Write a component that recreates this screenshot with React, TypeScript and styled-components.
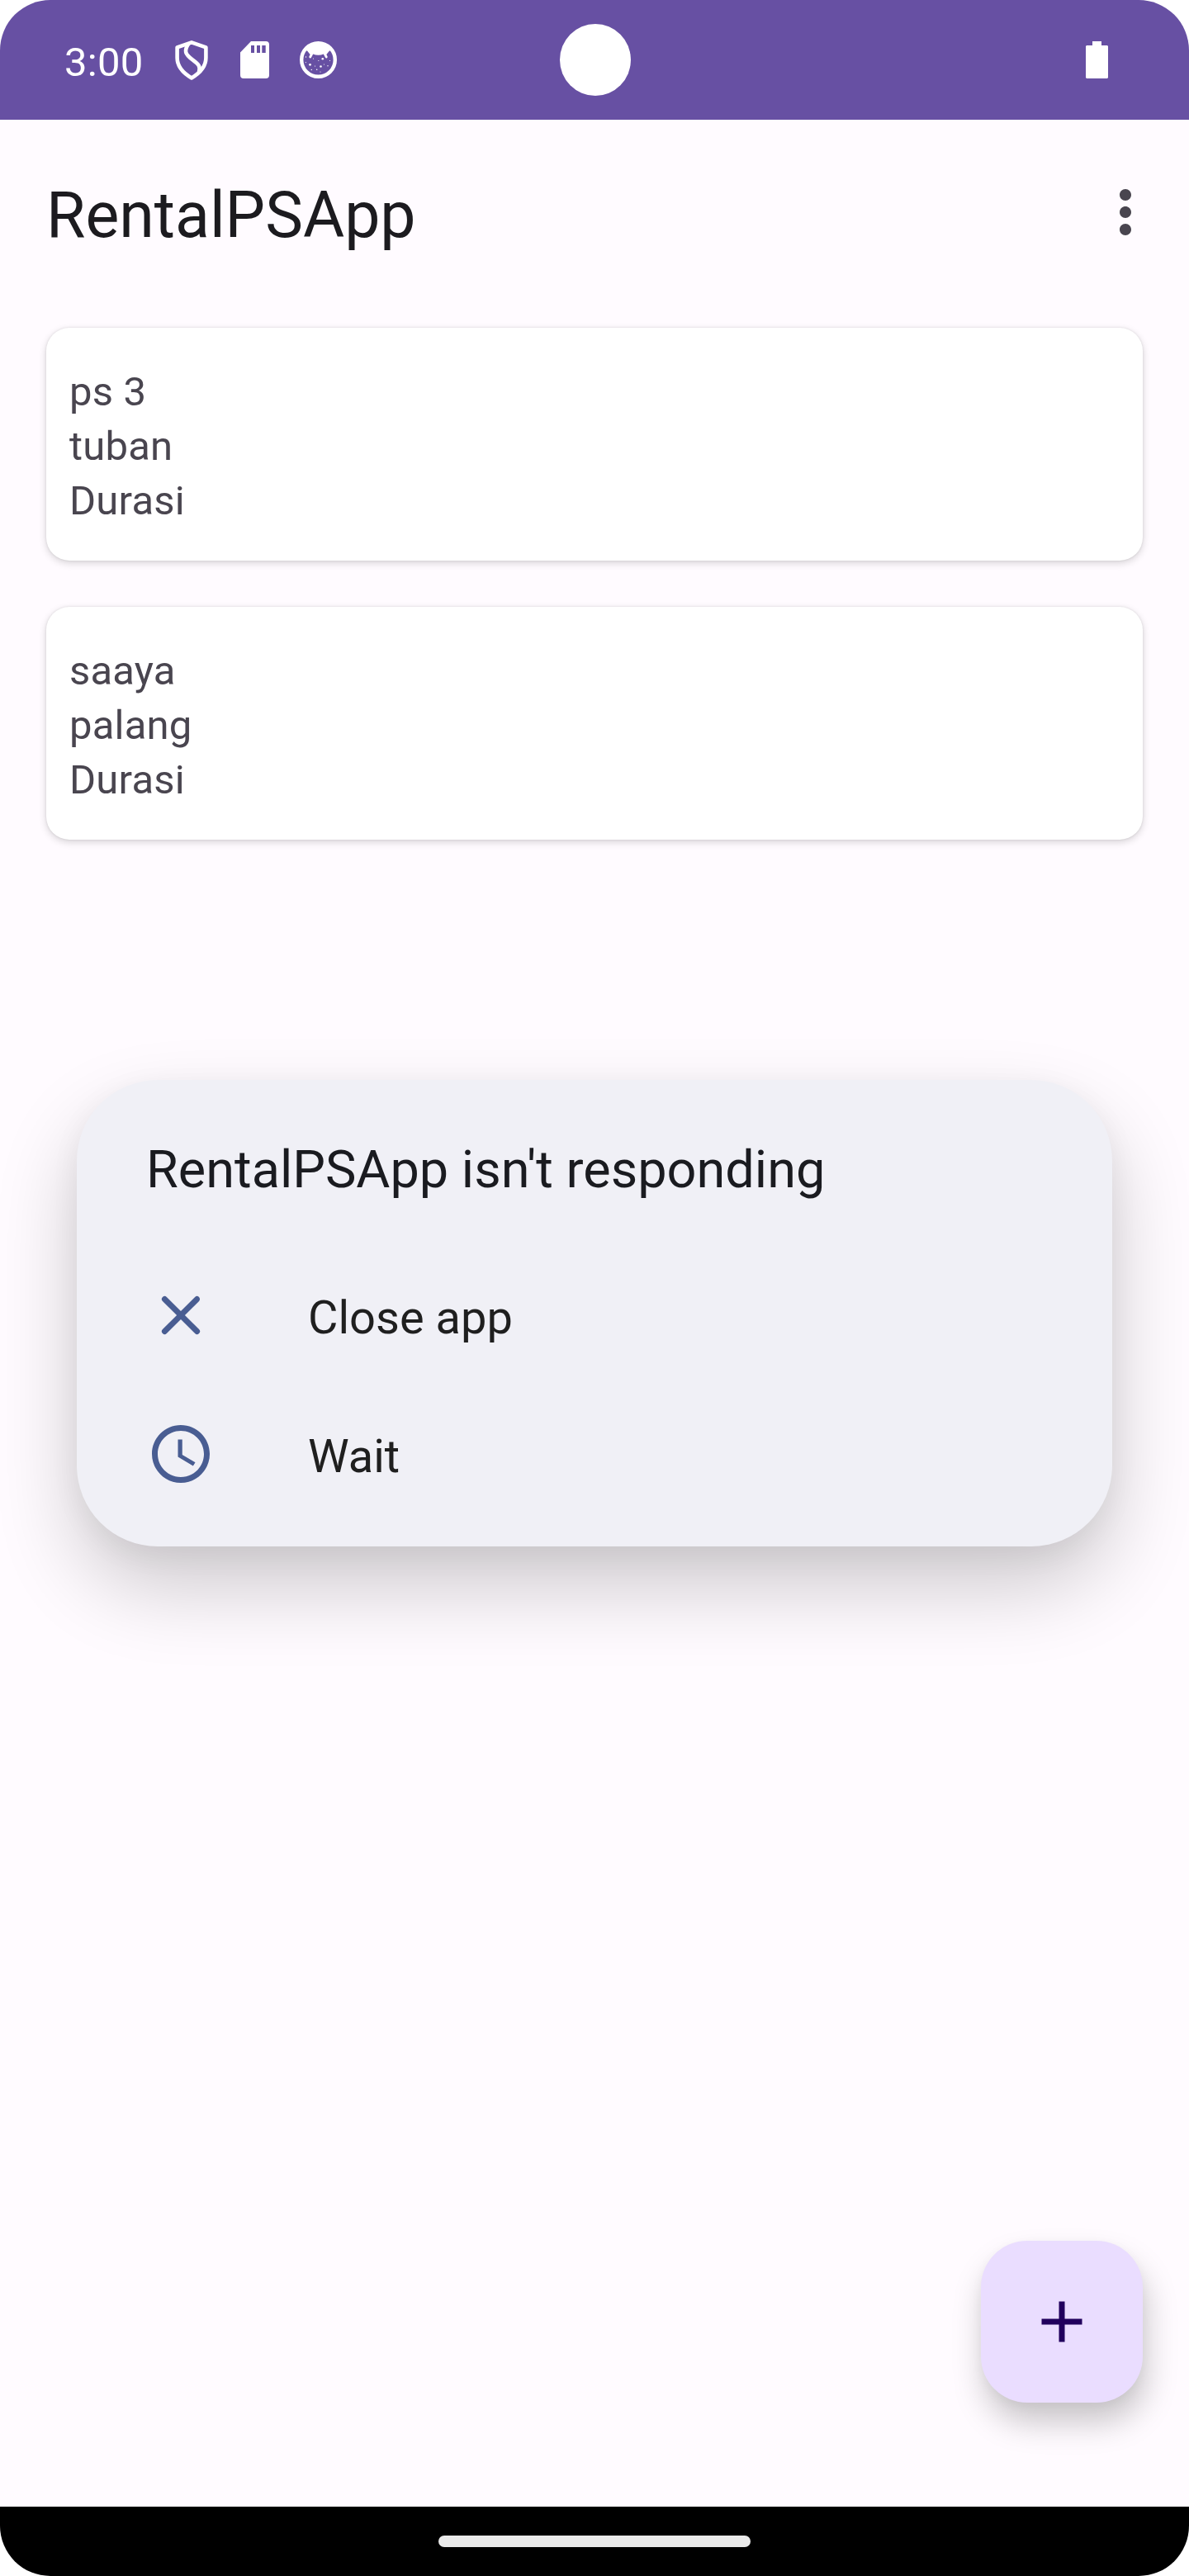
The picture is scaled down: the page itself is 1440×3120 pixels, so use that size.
import React from 'react';
import styled, { createGlobalStyle } from 'styled-components';

const GlobalStyle = createGlobalStyle`
  *, *::before, *::after { box-sizing: border-box; }
  html, body { margin: 0; padding: 0; background: #ffffff; }
  body { font-family: Roboto, "Noto Sans", sans-serif; }
  svg { display: block; flex: none; }
`;

const Screen = styled.div`
  position: relative;
  display: flex;
  flex-direction: column;
  width: 1440px;
  height: 3120px;
  overflow: hidden;
  border-radius: 61px;
  background: #fffbff;
`;

const StatusBar = styled.header`
  position: relative;
  display: flex;
  align-items: center;
  justify-content: space-between;
  flex: none;
  height: 145px;
  padding: 0 98px 0 78px;
  background: #6750a3;
  color: #ffffff;
`;

const StatusGroup = styled.div`
  display: flex;
  align-items: center;
`;

const Clock = styled.span`
  width: 132px;
  padding-top: 6px;
  font-size: 49px;
  line-height: 58px;
  letter-spacing: 0.3px;
`;

const NotificationIcons = styled.div`
  display: flex;
  align-items: center;
  gap: 37px;
`;

const CameraCutout = styled.div`
  position: absolute;
  top: 29px;
  left: 678px;
  width: 86px;
  height: 87px;
  border-radius: 50%;
  background: #ffffff;
`;

const AppBar = styled.div`
  display: flex;
  align-items: center;
  justify-content: space-between;
  flex: none;
  height: 224px;
  padding: 0 35px 0 56px;
`;

const AppTitle = styled.h1`
  margin: 0;
  padding-top: 8px;
  font-size: 77px;
  line-height: 90px;
  font-weight: 400;
  color: #1c1b1f;
`;

const MenuButton = styled.button`
  display: flex;
  margin: 0;
  padding: 0;
  border: 0;
  background: none;
  color: #49454f;
`;

const RentalList = styled.main`
  display: flex;
  flex-direction: column;
  flex: 1;
  gap: 56px;
  padding: 28px 56px;
`;

const RentalCard = styled.article`
  display: flex;
  flex-direction: column;
  height: 282px;
  padding: 45px 28px 0;
  border-radius: 28px;
  background: #ffffff;
  box-shadow: 0 3px 10px rgba(0, 0, 0, 0.16), 0 0 3px rgba(0, 0, 0, 0.1);
`;

const RentalLine = styled.span`
  font-size: 49px;
  line-height: 66px;
  letter-spacing: 0.2px;
  color: #49454f;
`;

const NavBar = styled.footer`
  display: flex;
  align-items: center;
  justify-content: center;
  flex: none;
  height: 84px;
  background: #000000;
`;

const NavHandle = styled.div`
  width: 378px;
  height: 14px;
  border-radius: 7px;
  background: #eaeaea;
`;

const Fab = styled.button`
  position: absolute;
  right: 56px;
  bottom: 210px;
  display: flex;
  align-items: center;
  justify-content: center;
  width: 196px;
  height: 196px;
  padding: 0;
  border: 0;
  border-radius: 56px;
  background: #eaddff;
  color: #21005d;
  box-shadow: 4px 24px 38px rgba(0, 0, 0, 0.21), 0 4px 14px rgba(0, 0, 0, 0.04);
`;

const Dialog = styled.section`
  position: absolute;
  top: 1308px;
  left: 93px;
  display: flex;
  flex-direction: column;
  width: 1254px;
  height: 565px;
  padding: 72px 84px 27px;
  border-radius: 98px;
  background: #f0f0f6;
  box-shadow: 0 48px 100px rgba(0, 0, 0, 0.2), 0 10px 36px rgba(0, 0, 0, 0.05);
`;

const DialogTitle = styled.h2`
  margin: 0 0 55px;
  font-size: 63px;
  line-height: 74px;
  font-weight: 400;
  color: #1a1b20;
`;

const DialogAction = styled.button`
  display: flex;
  align-items: center;
  gap: 112px;
  height: 168px;
  margin: 0;
  padding: 0;
  border: 0;
  background: none;
  font-family: inherit;
  font-size: 56px;
  line-height: 66px;
  color: #1f1f1f;
  text-align: left;

  svg { color: #495d92; }
`;

const ActionLabel = styled.span`
  padding-top: 6px;
`;

const ShieldIcon = () => (
  <svg width="44" height="50" viewBox="0 0 44 50" fill="none" stroke="#fff" strokeWidth="4.6" strokeLinejoin="round">
    <path d="M22 3.4 4.6 9.4V22c0 9.500 5.400 17.400 17.400 24.400C34 39.400 39.400 31.500 39.400 22V9.400Z" />
    <path d="M18.500 4.600c-6 9 -4.500 13 5 20 7.500 5.500 9.500 8 7.500 15" />
  </svg>
);

const SdCardIcon = () => (
  <svg width="35" height="45" viewBox="0 0 35 45" fill="#fff" fillRule="evenodd">
    <path d="M13 0H31a4 4 0 0 1 4 4V41a4 4 0 0 1-4 4H4a4 4 0 0 1-4-4V13.500ZM13 5v9h4V5Zm7 0v9h4V5Zm6.300 0v9h4.400V5Z" />
  </svg>
);

const specks = [
  [7.5, 19, 0.7], [7.3, 25.6, 0.6], [12.5, 28.3, 1.4], [16.5, 21, 0.6], [18.5, 30, 0.6],
  [22.8, 23.5, 0.6], [25.5, 30.5, 1.3], [27.8, 21.3, 1.3], [29.5, 28, 0.6], [34, 29.7, 0.7],
  [36.5, 23.5, 0.6], [14.3, 34.5, 0.7], [20.7, 34.3, 0.8], [25, 37, 0.6],
];

const CatFaceIcon = () => (
  <svg width="45" height="45" viewBox="0 0 45 45">
    <circle cx="22.500" cy="22.500" r="20.300" fill="none" stroke="#fff" strokeWidth="4.400" />
    <path d="M6 10.500 9 11.500 12.800 16.200 16 15.600Q22.500 18 29 15.600L32.200 16.200 36 11.500 39 10.500A20.400 20.400 0 0 0 6 10.500Z" fill="#fff" />
    <path d="M14.600 15.500 12.700 19M30.400 15.500 32.300 19" stroke="#fff" strokeWidth="2.800" strokeLinecap="round" />
    {specks.map(([x, y, r]) => (
      <circle key={`${x}-${y}`} cx={x} cy={y} r={r} fill="#fff" />
    ))}
  </svg>
);

const BatteryIcon = () => (
  <svg width="27" height="45" viewBox="0 0 27 45" fill="#fff">
    <path d="M8 0H19V5H26L27 6V44L26 45H1L0 44V6L1 5H8Z" />
  </svg>
);

const MaterialIcon = ({ path }: { path: string }) => (
  <svg width="84" height="84" viewBox="0 0 24 24" fill="currentColor">
    <path d={path} />
  </svg>
);

const icons = {
  more: 'M12 8c1.100 0 2-.9 2-2s-.9-2-2-2-2 .9-2 2 .9 2 2 2zm0 2c-1.100 0-2 .9-2 2s.9 2 2 2 2-.9 2-2-.9-2-2-2zm0 6c-1.100 0-2 .9-2 2s.9 2 2 2 2-.9 2-2-.9-2-2-2z',
  add: 'M19 13h-6v6h-2v-6H5v-2h6V5h2v6h6v2z',
  close:
    'M18.300 5.710a.996.996 0 0 0-1.410 0L12 10.590 7.110 5.700A.996.996 0 1 0 5.700 7.110L10.590 12 5.700 16.890a.996.996 0 1 0 1.410 1.410L12 13.410l4.890 4.890a.996.996 0 1 0 1.410-1.410L13.410 12l4.890-4.890c.38-.38.38-1.020 0-1.400z',
  wait:
    'M11.990 2C6.470 2 2 6.480 2 12s4.470 10 9.990 10C17.520 22 22 17.520 22 12S17.520 2 11.990 2zM12 20c-4.420 0-8-3.580-8-8s3.580-8 8-8 8 3.580 8 8-3.580 8-8 8zm.5-13H11v6l5.250 3.150.75-1.230-4.500-2.670z',
};

const rentals = [
  { console: 'ps 3', place: 'tuban', duration: 'Durasi' },
  { console: 'saaya', place: 'palang', duration: 'Durasi' },
];

export default function App() {
  return (
    <>
      <GlobalStyle />
      <Screen>
        <StatusBar>
          <StatusGroup>
            <Clock>3:00</Clock>
            <NotificationIcons>
              <ShieldIcon />
              <SdCardIcon />
              <CatFaceIcon />
            </NotificationIcons>
          </StatusGroup>
          <CameraCutout />
          <BatteryIcon />
        </StatusBar>
        <AppBar>
          <AppTitle>RentalPSApp</AppTitle>
          <MenuButton aria-label="More options">
            <MaterialIcon path={icons.more} />
          </MenuButton>
        </AppBar>
        <RentalList>
          {rentals.map((rental) => (
            <RentalCard key={rental.console}>
              <RentalLine>{rental.console}</RentalLine>
              <RentalLine>{rental.place}</RentalLine>
              <RentalLine>{rental.duration}</RentalLine>
            </RentalCard>
          ))}
        </RentalList>
        <NavBar>
          <NavHandle />
        </NavBar>
        <Fab aria-label="Add rental">
          <MaterialIcon path={icons.add} />
        </Fab>
        <Dialog>
          <DialogTitle>RentalPSApp isn't responding</DialogTitle>
          <DialogAction>
            <MaterialIcon path={icons.close} />
            <ActionLabel>Close app</ActionLabel>
          </DialogAction>
          <DialogAction>
            <MaterialIcon path={icons.wait} />
            <ActionLabel>Wait</ActionLabel>
          </DialogAction>
        </Dialog>
      </Screen>
    </>
  );
}
